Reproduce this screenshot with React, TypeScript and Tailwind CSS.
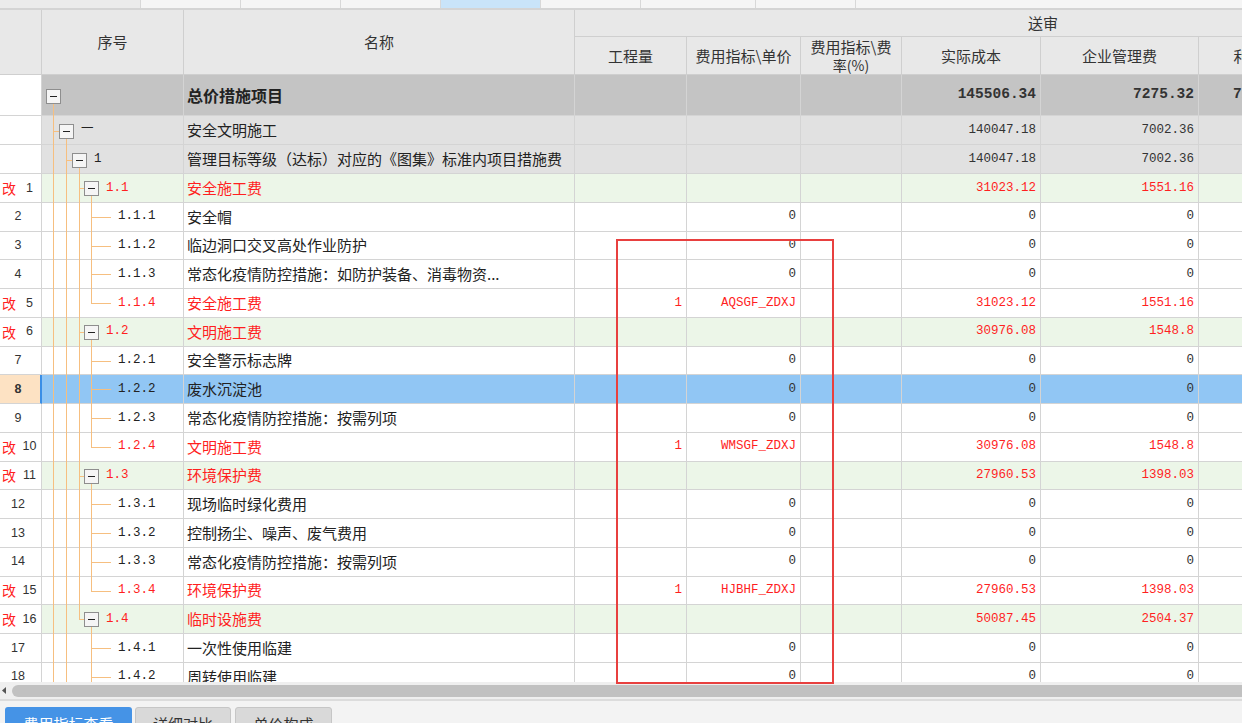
import clsx from 'clsx';

const COLS = 'grid grid-cols-[42px_142px_391px_112px_114px_101px_139px_158px_100px_213px]';
const CJK = "font-['Noto_Sans_CJK_SC',sans-serif]";
const MONO = "font-['Liberation_Mono','Noto_Sans_CJK_SC',monospace]";
const LINE = 'border-r border-b border-[#d4d4d4]';

const R = 28.76;

type Row = {
  no?: number;
  mod?: boolean;
  sel?: boolean;
  code: string;
  level: number;
  group?: boolean;
  name: string;
  qty?: string;
  unit?: string;
  cost?: string;
  mgmt?: string;
  profit?: string;
  red?: boolean;
  tone: 'top' | 'grey' | 'green' | 'white';
  h: number;
  full: number[];
  half?: number;
};

const heights: Record<string, string> = {
  '41': 'h-[41px]',
  '29': 'h-[29px]',
  '28.76': 'h-[28.76px]',
};

const tones = {
  top: 'bg-[#c4c4c4]',
  grey: 'bg-[#e1e1e1]',
  green: 'bg-[#ecf6e8]',
  white: 'bg-white',
};

const indent: Record<number, string> = {
  0: 'pl-[24px]',
  1: 'pl-[39px]',
  2: 'pl-[52px]',
  3: 'pl-[64px]',
  4: 'pl-[76px]',
};

const leaf = (no: number, code: string, name: string): Row => ({
  no,
  code,
  level: 4,
  name,
  unit: '0',
  cost: '0',
  mgmt: '0',
  tone: 'white',
  h: R,
  full: [0, 1, 2, 3],
});

const rows: Row[] = [
  { code: '', level: 0, group: true, name: '总价措施项目', cost: '145506.34', mgmt: '7275.32', profit: '7275.32', tone: 'top', h: 41, full: [] },
  { code: '一', level: 1, group: true, name: '安全文明施工', cost: '140047.18', mgmt: '7002.36', tone: 'grey', h: 29, full: [0] },
  { code: '1', level: 2, group: true, name: '管理目标等级（达标）对应的《图集》标准内项目措施费', cost: '140047.18', mgmt: '7002.36', tone: 'grey', h: 29, full: [0, 1] },
  { no: 1, mod: true, code: '1.1', level: 3, group: true, name: '安全施工费', cost: '31023.12', mgmt: '1551.16', red: true, tone: 'green', h: R, full: [0, 1, 2] },
  leaf(2, '1.1.1', '安全帽'),
  leaf(3, '1.1.2', '临边洞口交叉高处作业防护'),
  leaf(4, '1.1.3', '常态化疫情防控措施：如防护装备、消毒物资...'),
  { no: 5, mod: true, code: '1.1.4', level: 4, name: '安全施工费', qty: '1', unit: 'AQSGF_ZDXJ', cost: '31023.12', mgmt: '1551.16', red: true, tone: 'white', h: R, full: [0, 1, 2], half: 3 },
  { no: 6, mod: true, code: '1.2', level: 3, group: true, name: '文明施工费', cost: '30976.08', mgmt: '1548.8', red: true, tone: 'green', h: R, full: [0, 1, 2] },
  leaf(7, '1.2.1', '安全警示标志牌'),
  { ...leaf(8, '1.2.2', '废水沉淀池'), sel: true },
  leaf(9, '1.2.3', '常态化疫情防控措施：按需列项'),
  { no: 10, mod: true, code: '1.2.4', level: 4, name: '文明施工费', qty: '1', unit: 'WMSGF_ZDXJ', cost: '30976.08', mgmt: '1548.8', red: true, tone: 'white', h: R, full: [0, 1, 2], half: 3 },
  { no: 11, mod: true, code: '1.3', level: 3, group: true, name: '环境保护费', cost: '27960.53', mgmt: '1398.03', red: true, tone: 'green', h: R, full: [0, 1, 2] },
  leaf(12, '1.3.1', '现场临时绿化费用'),
  leaf(13, '1.3.2', '控制扬尘、噪声、废气费用'),
  leaf(14, '1.3.3', '常态化疫情防控措施：按需列项'),
  { no: 15, mod: true, code: '1.3.4', level: 4, name: '环境保护费', qty: '1', unit: 'HJBHF_ZDXJ', cost: '27960.53', mgmt: '1398.03', red: true, tone: 'white', h: R, full: [0, 1, 2], half: 3 },
  { no: 16, mod: true, code: '1.4', level: 3, group: true, name: '临时设施费', cost: '50087.45', mgmt: '2504.37', red: true, tone: 'green', h: R, full: [0, 1], half: 2 },
  { ...leaf(17, '1.4.1', '一次性使用临建'), full: [0, 1, 3] },
  { ...leaf(18, '1.4.2', '周转使用临建'), full: [0, 1, 3] },
];

// tree connector lines + expand box, drawn behind the code text
function TreeLines({ r }: { r: Row }) {
  const B = [4, 17, 30, 42];
  const T = B.map((b) => b + 7.5);
  const h = r.h;
  const cy = Math.round(h / 2);
  const c = '#f6bf80';
  const b = B[r.level];
  return (
    <svg width={142} height={h} className="absolute left-0 top-0" shapeRendering="crispEdges">
      {r.full.map((a) => (
        <line key={a} x1={T[a]} x2={T[a]} y1={0} y2={h} stroke={c} />
      ))}
      {r.half !== undefined && <line x1={T[r.half]} x2={T[r.half]} y1={0} y2={cy + 0.5} stroke={c} />}
      {r.group ? (
        <>
          {r.level > 0 && <line x1={T[r.level - 1]} x2={b} y1={cy + 0.5} y2={cy + 0.5} stroke={c} />}
          <line x1={T[r.level]} x2={T[r.level]} y1={cy + 7} y2={h} stroke={c} />
          <rect x={b + 0.5} y={cy - 7 + 0.5} width={14} height={14} fill="#f5f5f5" stroke="#8e8e8e" />
          <line x1={b + 4} x2={b + 11} y1={cy + 0.5} y2={cy + 0.5} stroke="#222" />
        </>
      ) : (
        <line x1={T[3]} x2={69} y1={cy + 0.5} y2={cy + 0.5} stroke={c} />
      )}
    </svg>
  );
}

function Value({ v, r, className }: { v?: string; r: Row; className?: string }) {
  const top = r.tone === 'top';
  return (
    <div
      className={clsx(
        LINE,
        'flex items-center justify-end overflow-hidden whitespace-nowrap pr-[4px]',
        MONO,
        top ? 'text-[14.5px] font-bold' : 'text-[12.5px]',
        r.red ? 'text-[#ff1f1f]' : 'text-[#333]',
        className,
      )}
    >
      {v}
    </div>
  );
}

function DataRow({ r }: { r: Row }) {
  const bg = r.sel ? 'bg-[#91c6f4]' : tones[r.tone];
  const text = r.red ? 'text-[#ff1f1f]' : 'text-[#222]';
  return (
    <div className={clsx(COLS, heights[String(r.h)])}>
      <div
        className={clsx(
          "flex items-center border-b border-[#d4d4d4] text-[12.5px] text-[#333] font-['Liberation_Sans',sans-serif]",
          r.sel ? 'border-r-2 border-r-[#3a8ee6] bg-[#fde2c3] font-bold' : 'border-r bg-white',
        )}
      >
        {r.mod ? (
          <>
            <span className={clsx('ml-[2px] text-[14px] leading-none text-[#ff1f1f]', CJK)}>改</span>
            <span className="flex-1 pl-[2px] text-center">{r.no}</span>
          </>
        ) : (
          <span className="w-[36px] text-center">{r.no}</span>
        )}
      </div>
      <div className={clsx(LINE, bg, 'relative flex items-center')}>
        <TreeLines r={r} />
        <span className={clsx('relative whitespace-nowrap text-[12.5px] leading-none', MONO, indent[r.group ? r.level : 4], text)}>
          {r.code}
        </span>
      </div>
      <div
        className={clsx(
          LINE,
          bg,
          'flex items-center overflow-hidden whitespace-nowrap pl-[3px] leading-[18px]',
          CJK,
          r.tone === 'top' ? 'text-[16px] font-bold' : 'text-[15px]',
          text,
        )}
      >
        {r.name}
      </div>
      <Value v={r.qty} r={r} className={bg} />
      <Value v={r.unit} r={r} className={bg} />
      <Value r={r} className={bg} />
      <Value v={r.cost} r={r} className={bg} />
      <Value v={r.mgmt} r={r} className={bg} />
      <Value v={r.profit} r={r} className={bg} />
      <Value r={r} className={bg} />
    </div>
  );
}

function Header() {
  const cell = clsx('flex items-center justify-center border-r border-b border-[#cfcfcf] text-[15px] leading-[18px] text-[#333] whitespace-nowrap', CJK);
  return (
    <div className={clsx(COLS, 'grid-rows-[27px_38px] bg-[#e8e8e8]')}>
      <div className={clsx(cell, 'row-span-2')} />
      <div className={clsx(cell, 'row-span-2')}>序号</div>
      <div className={clsx(cell, 'row-span-2')}>名称</div>
      <div className={clsx(cell, 'col-span-7')}>送审</div>
      <div className={cell}>工程量</div>
      <div className={cell}>费用指标\单价</div>
      <div className={clsx(cell, 'flex-col leading-[17px]')}>
        <span>费用指标\费</span>
        <span className="text-[14px]">率(%)</span>
      </div>
      <div className={cell}>实际成本</div>
      <div className={cell}>企业管理费</div>
      <div className={cell}>利润</div>
      <div className={cell} />
    </div>
  );
}

function TopStrip() {
  const widths = ['w-[100px]', 'w-[100px]', 'w-[100px]', 'w-[100px]', 'w-[100px]', 'w-[115px]', 'w-[100px]'];
  return (
    <div className="flex h-[10px] border-b-2 border-[#d4d4d4] bg-[#f5f5f5]">
      <div className="w-[141px] border-r border-[#d8d8d8] bg-[#ebebeb]" />
      {widths.map((w, i) => (
        <div key={i} className={clsx(w, 'border-r border-[#d8d8d8]', i === 3 && 'bg-[#c9e4f9]')} />
      ))}
    </div>
  );
}

export default function App() {
  return (
    <div className="relative h-[723px] w-[1242px] overflow-hidden bg-white">
      <TopStrip />
      <div className="overflow-hidden">
        <Header />
        <div className="h-[607px] overflow-hidden">
          {rows.map((r, i) => (
            <DataRow key={i} r={r} />
          ))}
        </div>
      </div>
      <div className="flex h-[17px] items-center bg-[#efefef]">
        <svg width={10} height={17} className="shrink-0">
          <path d="M6 5 L2 8.5 L6 12 Z" fill="#555" />
        </svg>
        <div className="ml-[2px] h-[12px] flex-1 rounded-l-[6px] bg-[#c1c1c1]" />
      </div>
      <div className="h-[2px] bg-[#dcdcdc]" />
      <div className={clsx('flex h-[22px] gap-[3px] bg-[#f3f3f3] pl-[5px] pt-[6px] text-[15px] leading-[15px]', CJK)}>
        <div className="h-[30px] w-[127px] shrink-0 rounded-t-[3px] bg-[#4593e6] pt-[9px] text-center text-white">费用指标查看</div>
        <div className="h-[30px] w-[96px] shrink-0 rounded-t-[3px] border border-[#c6c6c6] bg-[#d9d9d9] pt-[8px] text-center text-[#333]">详细对比</div>
        <div className="ml-[1px] h-[30px] w-[97px] shrink-0 rounded-t-[3px] border border-[#c6c6c6] bg-[#d9d9d9] pt-[8px] text-center text-[#333]">单价构成</div>
      </div>
      <div className="pointer-events-none absolute left-[616px] top-[239px] h-[445px] w-[218px] border-2 border-[#e8403f]" />
    </div>
  );
}
